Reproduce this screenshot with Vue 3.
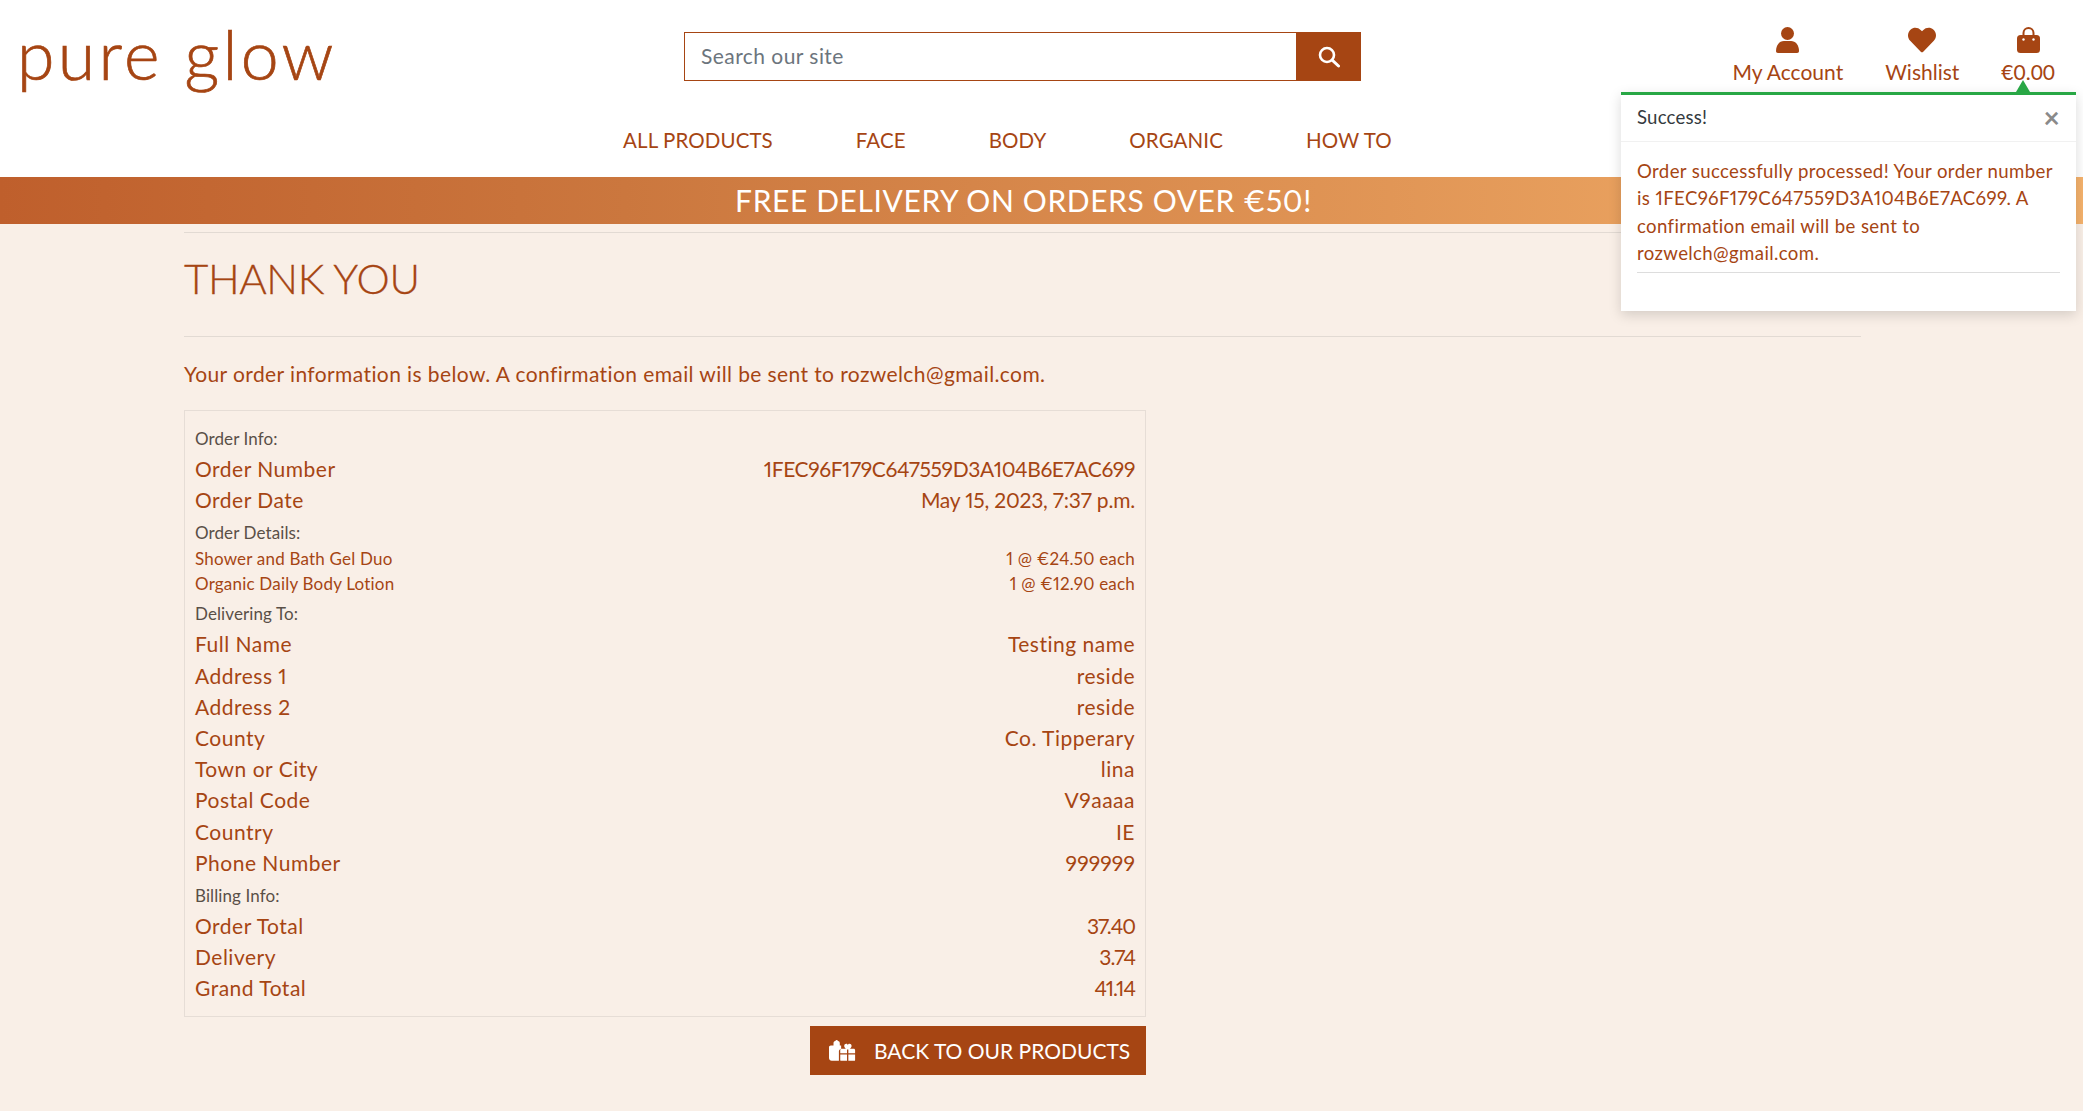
<script setup>
const nav = ['ALL PRODUCTS', 'FACE', 'BODY', 'ORGANIC', 'HOW TO'];

const sections = [
  {
    title: 'Order Info:',
    rows: [
      ['Order Number', '1FEC96F179C647559D3A104B6E7AC699', 'hash'],
      ['Order Date', 'May 15, 2023, 7:37 p.m.', 'date'],
    ],
  },
  {
    title: 'Order Details:',
    small: true,
    rows: [
      ['Shower and Bath Gel Duo', '1 @ €24.50 each'],
      ['Organic Daily Body Lotion', '1 @ €12.90 each'],
    ],
  },
  {
    title: 'Delivering To:',
    rows: [
      ['Full Name', 'Testing name'],
      ['Address 1', 'reside'],
      ['Address 2', 'reside'],
      ['County', 'Co. Tipperary'],
      ['Town or City', 'lina'],
      ['Postal Code', 'V9aaaa'],
      ['Country', 'IE'],
      ['Phone Number', '999999', 'phone'],
    ],
  },
  {
    title: 'Billing Info:',
    rows: [
      ['Order Total', '37.40', 'money'],
      ['Delivery', '3.74', 'money'],
      ['Grand Total', '41.14', 'money'],
    ],
  },
];
</script>

<template>
  <div class="page">
    <header class="header">
      <div class="top">
        <div class="logo">pure glow</div>
        <form class="search" @submit.prevent>
          <input type="text" placeholder="Search our site">
          <button type="submit" aria-label="Search">
            <svg viewBox="0 0 22 22" width="22" height="22">
              <circle cx="9" cy="9" r="7" fill="none" stroke="currentColor" stroke-width="2.6"/>
              <path d="M14.200 14.200L20.500 20" fill="none" stroke="currentColor" stroke-width="3" stroke-linecap="round"/>
            </svg>
          </button>
        </form>
        <div class="links">
          <a class="link account">
            <svg viewBox="0 0 23 26" width="23" height="26">
              <circle cx="11.500" cy="6.500" r="6.500" fill="currentColor"/>
              <path fill="currentColor" d="M0 24c0-6 3.500-10 8-10h7c4.500 0 8 4 8 10 0 1.300-.7 2-2 2H2c-1.300 0-2-.7-2-2z"/>
            </svg>
            <span>My Account</span>
          </a>
          <a class="link wish">
            <svg class="heart" viewBox="0 0 512 512" width="28" height="28">
              <path fill="currentColor" d="M462.3 62.6C407.5 15.9 326 24.3 275.7 76.2L256 96.5l-19.7-20.3C186.1 24.3 104.5 15.9 49.7 62.6c-62.8 53.6-66.1 149.8-9.9 207.9l193.5 199.8c12.5 12.9 32.8 12.9 45.3 0l193.5-199.8c56.3-58.1 53-154.3-9.8-207.9z"/>
            </svg>
            <span>Wishlist</span>
          </a>
          <a class="link bag">
            <svg viewBox="0 0 23 26" width="23" height="26">
              <path d="M6.500 10V6a5 5 0 0 1 10 0v4" fill="none" stroke="currentColor" stroke-width="2"/>
              <rect x="0" y="8" width="23" height="18" rx="3.500" fill="currentColor"/>
              <circle cx="6.500" cy="12.500" r="1.200" fill="#fff"/>
              <circle cx="16.500" cy="12.500" r="1.200" fill="#fff"/>
            </svg>
            <span>€0.00</span>
          </a>
        </div>
      </div>
      <nav class="nav">
        <a v-for="item in nav" :key="item">{{ item }}</a>
      </nav>
      <div class="banner">FREE DELIVERY ON ORDERS OVER €50!</div>
    </header>

    <main class="content">
      <hr class="rule first">
      <h1>THANK YOU</h1>
      <hr class="rule">
      <p class="intro">Your order information is below. A confirmation email will be sent to rozwelch@gmail.com.</p>

      <div class="col">
        <div class="order">
          <section v-for="s in sections" :key="s.title">
            <div class="label">{{ s.title }}</div>
            <div v-for="r in s.rows" :key="r[0]" class="row" :class="{ small: s.small }">
              <span>{{ r[0] }}</span>
              <span :class="r[2]">{{ r[1] }}</span>
            </div>
          </section>
        </div>
        <a class="back">
          <svg viewBox="0 0 30 24" width="27" height="22">
            <path fill="currentColor" d="M2 7h3V4.500C5 3 6 2 7 2c.5-1.300 2.500-1.300 3 0 1 0 2 1 2 2.500V7h1.500v3.500c-1.500.5-2.500 1.500-2.500 3V24H3c-1.700 0-3-1.300-3-3V9c0-1.100.9-2 2-2z"/>
            <path fill="currentColor" d="M12.500 17H20v7h-6.500c-.6 0-1-.4-1-1zM21.500 17H29v6c0 .6-.4 1-1 1h-6.500zM14 10.500h4.800c-1-.6-1.900-1.700-1.900-3 0-1.500 1.100-2.500 2.300-2.500 1 0 1.800.7 1.500 1.800.3-1.100 1.100-1.800 2-1.800 1.300 0 2.400 1 2.400 2.500 0 1.300-.9 2.400-1.900 3H27.500c.8 0 1.500.7 1.500 1.500V15.500h-7.500v-4h-1.500v4h-7.500V12c0-.8.700-1.500 1.500-1.500z"/>
          </svg>
          <span>BACK TO OUR PRODUCTS</span>
        </a>
      </div>
    </main>

    <div class="toast">
      <span class="arrow"></span>
      <div class="toast-head">
        <span>Success!</span>
        <span class="close">×</span>
      </div>
      <div class="toast-body">
        <p>Order successfully processed! Your order number is 1FEC96F179C647559D3A104B6E7AC699. A confirmation email will be sent to rozwelch@gmail.com.</p>
        <hr>
      </div>
    </div>
  </div>
</template>

<style>
html, body {
  margin: 0;
  background: #f9efe7;
}
</style>

<style scoped>
.page {
  position: relative;
  min-height: 1111px;
  font-family: "Lato", "Open Sans", sans-serif;
  font-variant-numeric: proportional-nums;
  letter-spacing: .4px;
  color: #a64513;
  background: #f9efe7;
  overflow: hidden;
}

.header {
  background: #fff;
}

.top {
  display: grid;
  grid-template-columns: 684px 677px 1fr;
  height: 104px;
}

.logo {
  padding: 14px 0 0 17px;
  font-size: 68px;
  line-height: 80px;
  font-weight: 300;
  letter-spacing: 3.3px;
  -webkit-text-stroke: .7px #a64513;
}

.search {
  display: flex;
  height: 49px;
  margin-top: 32px;
}

.search input {
  flex: 1;
  min-width: 0;
  box-sizing: border-box;
  padding: 0 16px 2px;
  border: 1.5px solid #a64513;
  border-right: 0;
  outline: 0;
  font: 21px "Lato", sans-serif;
  letter-spacing: .45px;
  color: #495057;
}

.search input::placeholder {
  color: #6c757d;
  opacity: 1;
}

.search button {
  display: flex;
  align-items: center;
  justify-content: center;
  width: 65px;
  padding: 0;
  border: 0;
  background: #a64513;
  color: #fff;
}

.links {
  display: flex;
  justify-content: flex-end;
  gap: 42px;
  padding: 27px 28px 0 0;
}

.link {
  display: flex;
  flex-direction: column;
  align-items: center;
  gap: 5px;
  font-size: 21px;
  line-height: 28px;
  letter-spacing: 0;
  font-variant-numeric: normal;
}

.heart {
  margin: -1px 0;
}

.nav {
  display: flex;
  justify-content: center;
  gap: 83px;
  height: 73px;
  padding-right: 68px;
  box-sizing: border-box;
  padding-top: 20px;
  font-size: 20.5px;
  line-height: 32px;
  letter-spacing: .1px;
}

.banner {
  height: 47px;
  margin-bottom: 1px;
  padding-right: 36px;
  box-sizing: border-box;
  text-align: center;
  font-size: 30px;
  line-height: 47px;
  letter-spacing: .6px;
  color: #fff;
  background: linear-gradient(90deg, #bf5f2c 0%, #cb773e 30%, #f5b26c 100%);
}

.content {
  margin: 0 222px 0 184px;
}

.rule {
  margin: 0;
  border: 0;
  border-top: 1px solid #e2dad3;
}

.first {
  margin-top: 8px;
}

h1 {
  margin: 0;
  padding: 17px 0 30px;
  font-size: 42px;
  line-height: 56px;
  font-weight: 300;
  letter-spacing: -.4px;
  -webkit-text-stroke: .3px #a64513;
}

.intro {
  margin: 0;
  padding: 22px 0 21px;
  font-size: 21px;
  line-height: 30px;
}

.col {
  width: 962px;
}

.order {
  padding: 10px 10px 12px;
  border: 1px solid #e6ddd6;
}

.label {
  padding-top: 4px;
  font-size: 17px;
  line-height: 28px;
  letter-spacing: .1px;
  color: #5a4f47;
}

.row {
  display: flex;
  justify-content: space-between;
  font-size: 21px;
  line-height: 31.2px;
  letter-spacing: .5px;
}

.row .hash {
  letter-spacing: -.4px;
}

.row .date {
  letter-spacing: -.2px;
}

.row .phone {
  letter-spacing: .1px;
}

.row .money {
  letter-spacing: -1px;
}

.row.small {
  font-size: 17px;
  line-height: 24.5px;
  letter-spacing: .2px;
}

.back {
  display: flex;
  align-items: center;
  gap: 18px;
  width: 336px;
  height: 49px;
  box-sizing: border-box;
  margin: 9px 0 0 auto;
  padding-left: 19px;
  font-size: 21px;
  letter-spacing: 0;
  color: #fff;
  background: #a64513;
}

.toast {
  position: absolute;
  top: 92px;
  left: 1621px;
  box-sizing: border-box;
  width: 455px;
  height: 219px;
  border-top: 3px solid #28a745;
  background: #fff;
  box-shadow: 0 4px 12px rgba(0, 0, 0, .15);
}

.arrow {
  position: absolute;
  top: -15px;
  left: 395px;
  border: 7px solid transparent;
  border-top: 0;
  border-bottom: 12px solid #28a745;
}

.toast-head {
  display: flex;
  justify-content: space-between;
  align-items: center;
  box-sizing: border-box;
  height: 47px;
  padding: 0 16px 3px;
  border-bottom: 1px solid #f1f1f1;
  font-size: 18.6px;
  letter-spacing: .2px;
  color: #343a40;
}

.close {
  font-size: 28px;
  font-weight: 700;
  color: #8a8a8a;
}

.toast-body {
  padding: 16px 16px 0;
}

.toast-body p {
  margin: 0;
  font-size: 18.6px;
  line-height: 27.3px;
  letter-spacing: .38px;
}

.toast-body hr {
  margin: 5px 0 0;
  border: 0;
  border-top: 1px solid #ddd;
}
</style>
